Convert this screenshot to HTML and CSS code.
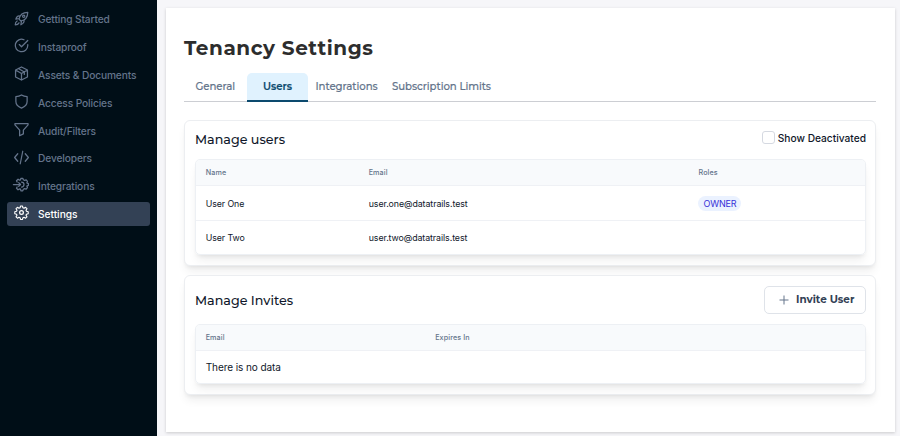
FILE: index.html
```html
<!DOCTYPE html>
<html lang="en">
<head>
<meta charset="utf-8">
<title>Tenancy Settings</title>
<link rel="stylesheet" href="styles.css">
</head>
<body>
<div class="app">
  <nav class="sidebar">
    <a class="item"><svg viewBox="0 0 24 24"><path d="M8 13c1-5 5-11 14-11 0 9-6 13-11 14zM8 12l-5 1c1-4 3-6 7-5M12 16l-1 6c4-2 6-4 5-8M5 16c-2 1-3 3-3 6 3 0 5-1 6-3"/><circle cx="15.500" cy="8.500" r="1.800"/></svg><span>Getting Started</span></a>
    <a class="item"><svg viewBox="0 0 24 24"><path d="M22 10.500V12a10 10 0 1 1-6-9.200M22 4L12 14l-3.500-3.500"/></svg><span>Instaproof</span></a>
    <a class="item"><svg viewBox="0 0 24 24"><path d="M12 1.500l9.500 5v11l-9.500 5-9.500-5v-11zM2.500 6.500L12 12l9.500-5.500M12 12v10.500M7 4l9.500 5.500v4"/></svg><span>Assets &amp; Documents</span></a>
    <a class="item"><svg viewBox="0 0 24 24"><path d="M12 1.500c3 2 6 2.500 9 2.500v8c0 5-4 8.500-9 10.500-5-2-9-5.500-9-10.500V4c3 0 6-.5 9-2.500z"/></svg><span>Access Policies</span></a>
    <a class="item"><svg viewBox="0 0 24 24"><path d="M1.500 2.500h21v2L15 13v6l-6 3v-9L1.500 4.500z"/></svg><span>Audit/Filters</span></a>
    <a class="item"><svg viewBox="0 0 24 24"><path d="M6 6l-5 6 5 6M18 6l5 6-5 6M14 2l-4 20"/></svg><span>Developers</span></a>
    <a class="item"><svg viewBox="0 0 24 24"><path d="M5 8L4 6l2.500-2.500L9 5l1.500-.5L11 2h3l1 2.500L17 5.500l2.500-1L21.500 7l-1 2.500 2.500 1v3l-2.500 1 1 2.500-2 2.500-2.500-1-2 1L14 22h-3l-.5-2.500L9 19l-2.500 1.500L4 18l1-2M-1 12h11M7.500 9l3 3-3 3M12 8a4 4 0 0 1 0 8"/></svg><span>Integrations</span></a>
    <a class="item active"><svg viewBox="0 0 24 24"><path d="M10.300 1.500h3.400l.8 3 1.900.8 2.700-1.600 2.400 2.400-1.600 2.700.8 1.900 3 .8v3.400l-3 .8-.8 1.900 1.600 2.700-2.400 2.400-2.700-1.600-1.900.8-.8 3h-3.400l-.8-3-1.900-.8-2.700 1.600-2.400-2.400 1.600-2.700-.8-1.900-3-.8v-3.400l3-.8.8-1.900-1.600-2.700 2.400-2.400 2.700 1.600 1.900-.8z" transform="translate(1 .3) scale(.917)"/><circle cx="12" cy="12" r="3"/></svg><span>Settings</span></a>
  </nav>
  <main class="page">
    <h1>Tenancy Settings</h1>
    <div class="tabs">
      <a class="tab general"><span>General</span></a>
      <a class="tab selected"><span>Users</span></a>
      <a class="tab integ"><span>Integrations</span></a>
      <a class="tab limits"><span>Subscription Limits</span></a>
    </div>
    <section class="card users">
      <header class="head">
        <h2>Manage users</h2>
        <label class="check"><i></i><span>Show Deactivated</span></label>
      </header>
      <div class="table">
        <div class="row th"><span>Name</span><span>Email</span><span>Roles</span></div>
        <div class="row"><span>User One</span><span>user.one@datatrails.test</span><span><b class="badge">OWNER</b></span></div>
        <div class="row last"><span>User Two</span><span>user.two@datatrails.test</span><span></span></div>
      </div>
    </section>
    <section class="card invites">
      <header class="head">
        <h2>Manage Invites</h2>
        <button class="invite"><svg viewBox="0 0 10 10"><path d="M5 .5v9M.5 5h9"/></svg><span>Invite User</span></button>
      </header>
      <div class="table">
        <div class="row th"><span>Email</span><span>Expires In</span></div>
        <div class="row empty"><span>There is no data</span></div>
      </div>
    </section>
  </main>
</div>
</body>
</html>
```
FILE: styles.css
```css
* { box-sizing: border-box; }
body { margin: 0; font-family: Inter, "Liberation Sans", sans-serif; background: #f6f6f9; color: #0f172a; }
.app { display: flex; width: 900px; height: 436px; overflow: hidden; }
.sidebar { width: 157px; flex: none; background: #000e17; padding: 7.300px 7.500px 0 7px; display: flex; flex-direction: column; gap: 3.820px; }
.item { display: flex; align-items: center; height: 24px; flex: none; padding-left: 7px; border-radius: 3px; color: #64748b; font-size: 10.200px; font-weight: 500; letter-spacing: -.13px; white-space: nowrap; }
.item svg { width: 15px; height: 15px; margin: -2.500px 9px 0 0; fill: none; stroke: currentColor; stroke-width: 2; stroke-linejoin: round; stroke-linecap: round; overflow: visible; }
.item.active { background: #334155; color: #fff; letter-spacing: -.03px; }
.page { width: 729px; height: 423.500px; flex: none; margin: 8px 0 0 9px; padding: 25px 19px 0 18px; background: #fff; box-shadow: 0 1px 3px #0000002e; }
h1 { margin: 0; height: 40px; font: 700 20px/31px Montserrat, Inter, sans-serif; color: #2d2d2d; letter-spacing: .56px; white-space: nowrap; }
.tabs { display: flex; height: 29px; border-bottom: 1px solid #ccced3; font: 500 10.200px/27px Montserrat, Inter, sans-serif; letter-spacing: -.06px; color: #64748b; white-space: nowrap; -webkit-text-stroke: .15px; }
.tab { height: 29px; flex: none; }
.general { width: 63px; padding-left: 11.500px; }
.selected { width: 61px; text-align: center; background: #e0f2fe; color: #0c4a6e; border-bottom: 2px solid #0c4a6e; border-radius: 5px 5px 0 0; font-weight: 600; }
.integ { width: 84px; padding-left: 7.500px; }
.limits { width: 100px; }
.card { border: 1px solid #eceef1; border-radius: 6px; background: #fff; padding: 0 9px 0 10px; box-shadow: 0 7px 10px -2px #00000012, 0 3px 4px -2px #00000012; }
.users { margin-top: 18px; height: 146px; }
.invites { margin-top: 9px; height: 120px; }
.head { height: 38px; display: flex; justify-content: space-between; align-items: center; }
.invites .head { height: 48px; }
h2 { margin: 0; font: 500 12.700px/20px Montserrat, Inter, sans-serif; white-space: nowrap; }
.users h2 { margin-top: -1px; }
.invites h2 { margin-top: 2px; }
.check { display: flex; align-items: center; gap: 2.500px; font-size: 10.200px; font-weight: 500; margin-top: -4px; white-space: nowrap; }
.check i { width: 13px; height: 13px; border: 1.500px solid #d5d9e1; border-radius: 3px; margin-top: -1px; }
.table { width: 671px; border: 1px solid #edf0f4; border-radius: 5px; overflow: hidden; box-shadow: 0 7px 10px -2px #00000012, 0 3px 4px -2px #00000012; }
.row { display: grid; grid-template-columns: 163px 329.800px 1fr; padding-left: 9.700px; height: 35px; align-items: center; border-bottom: 1px solid #eff1f5; font-size: 8.800px; letter-spacing: -.07px; white-space: nowrap; }
.invites .row { grid-template-columns: 229.500px 1fr; }
.row.th { height: 26px; background: #f8fafc; font-size: 7.200px; font-weight: 500; color: #64748b; letter-spacing: .1px; }
.row.last { height: 33px; border-bottom: 0; }
.row.empty { height: 31.500px; border-bottom: 0; font-size: 10px; }
.badge { display: inline-block; height: 15px; line-height: 15px; padding: 0 5px; border-radius: 8px; background: #ebf2ff; color: #3730d8; font-weight: 400; font-size: 9px; letter-spacing: -.15px; }
.invite { width: 102px; height: 28px; border: 1px solid #dfe3e9; border-radius: 5px; background: #fff; padding: 0 0 0 14px; display: flex; align-items: center; font: 700 10.400px/20px Montserrat, Inter, sans-serif; color: #334155; white-space: nowrap; }
.invite svg { width: 10px; height: 10px; margin-right: 7px; fill: none; stroke: #64748b; }
```
